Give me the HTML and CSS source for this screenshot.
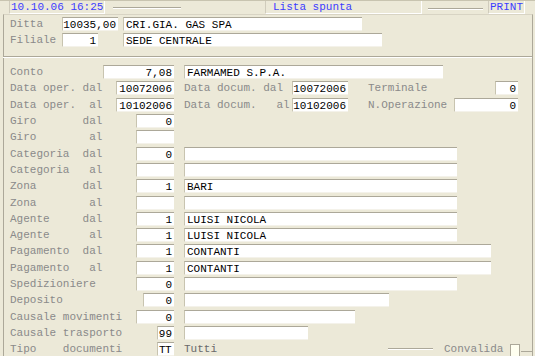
FILE: index.html
```html
<!DOCTYPE html>
<html lang="it">
<head>
  <meta charset="UTF-8">
  <title>Lista spunta</title>
  <link rel="stylesheet" href="styles.css">
</head>
<body>
<div class="screen">

  <div class="topbar">
    <div class="tab clock">10.10.06 16:25</div>
    <div class="groove g1"></div>
    <div class="tab title">Lista spunta</div>
    <div class="groove g2"></div>
    <div class="tab print">PRINT</div>
  </div>

  <div class="head">
    <div class="row">
      <span class="lbl w52">Ditta</span>
      <span class="fld num w56">10035,00</span>
      <span class="fld txt w239 ml5">CRI.GIA. GAS SPA</span>
    </div>
    <div class="row">
      <span class="lbl w52">Filiale</span>
      <span class="fld num w36">1</span>
      <span class="fld txt w259 ml25">SEDE CENTRALE</span>
    </div>
  </div>

  <div class="main">
    <div class="row">
      <div class="left"><span class="lbl">Conto</span><span class="fld num w71">7,08</span></div>
      <span class="fld txt w259">FARMAMED S.P.A.</span>
    </div>
    <div class="row">
      <div class="left"><span class="lbl">Data oper. dal</span><span class="fld num w58">10072006</span></div>
      <span class="lbl w108">Data docum. dal</span>
      <span class="fld num w56">10072006</span>
      <span class="lbl w127 ml20">Terminale</span>
      <span class="fld num w23">0</span>
    </div>
    <div class="row">
      <div class="left"><span class="lbl">Data oper.  al</span><span class="fld num w58">10102006</span></div>
      <span class="lbl w108">Data docum.   al</span>
      <span class="fld num w56">10102006</span>
      <span class="lbl w86 ml20">N.Operazione</span>
      <span class="fld num w64">0</span>
    </div>
    <div class="row">
      <div class="left"><span class="lbl">Giro       dal</span><span class="fld num w38">0</span></div>
    </div>
    <div class="row">
      <div class="left"><span class="lbl">Giro        al</span><span class="fld num w38"></span></div>
    </div>
    <div class="row">
      <div class="left"><span class="lbl">Categoria  dal</span><span class="fld num w38">0</span></div>
      <span class="fld txt w273"></span>
    </div>
    <div class="row">
      <div class="left"><span class="lbl">Categoria   al</span><span class="fld num w38"></span></div>
      <span class="fld txt w273"></span>
    </div>
    <div class="row">
      <div class="left"><span class="lbl">Zona       dal</span><span class="fld num w38">1</span></div>
      <span class="fld txt w273">BARI</span>
    </div>
    <div class="row">
      <div class="left"><span class="lbl">Zona        al</span><span class="fld num w38"></span></div>
      <span class="fld txt w273"></span>
    </div>
    <div class="row">
      <div class="left"><span class="lbl">Agente     dal</span><span class="fld num w38">1</span></div>
      <span class="fld txt w273">LUISI NICOLA</span>
    </div>
    <div class="row">
      <div class="left"><span class="lbl">Agente      al</span><span class="fld num w38">1</span></div>
      <span class="fld txt w273">LUISI NICOLA</span>
    </div>
    <div class="row">
      <div class="left"><span class="lbl">Pagamento  dal</span><span class="fld num w38">1</span></div>
      <span class="fld txt w307">CONTANTI</span>
    </div>
    <div class="row">
      <div class="left"><span class="lbl">Pagamento   al</span><span class="fld num w38">1</span></div>
      <span class="fld txt w307">CONTANTI</span>
    </div>
    <div class="row">
      <div class="left"><span class="lbl">Spedizioniere</span><span class="fld num w38">0</span></div>
      <span class="fld txt w273"></span>
    </div>
    <div class="row">
      <div class="left"><span class="lbl">Deposito</span><span class="fld num w31">0</span></div>
      <span class="fld txt w205"></span>
    </div>
    <div class="row">
      <div class="left"><span class="lbl">Causale movimenti</span><span class="fld num w38">0</span></div>
      <span class="fld txt w171"></span>
    </div>
    <div class="row">
      <div class="left"><span class="lbl">Causale trasporto</span><span class="fld num w17">99</span></div>
      <span class="fld txt w124"></span>
    </div>
    <div class="row">
      <div class="left"><span class="lbl">Tipo    documenti</span><span class="fld code w17">TT</span></div>
      <span class="lbl tutti">Tutti</span>
      <div class="groove g3"></div>
      <span class="lbl">Convalida</span>
      <span class="check"></span>
    </div>
  </div>

</div>
</body>
</html>
```
FILE: styles.css
```css
body {
  margin: 0;
  background-color: #ece9d8;
  font-family: "Liberation Mono", "DejaVu Sans Mono", monospace;
  font-size: 11px;
}
.screen {
  width: 535px;
  height: 356px;
  overflow: hidden;
  position: relative;
  box-sizing: border-box;
  border-top: 1px solid #c8c4b0;
}
.screen::before {
  content: "";
  position: absolute;
  left: 3px;
  right: 2px;
  top: 13px;
  bottom: -2px;
  border-left: 1px solid #aca899;
  border-right: 1px solid #aca899;
  border-top: 1px solid #d8d4c4;
}
.topbar {
  display: flex;
  align-items: flex-start;
  height: 13px;
  padding-left: 9px;
  position: relative;
  z-index: 1;
}
.tab {
  height: 13px;
  line-height: 12px;
  color: #3c3cff;
  white-space: nowrap;
  box-sizing: border-box;
  border-right: 1px solid #fff;
  border-bottom: 1px solid #fff;
  border-left: 1px solid #d0ccbc;
  background: #ece9d8;
}
.clock {
  width: 96px;
  padding-left: 1px;
}
.title {
  width: 157px;
  padding-left: 7px;
}
.print {
  width: 37px;
  padding-left: 1px;
}
.groove {
  height: 0;
  border-top: 1px solid #aca899;
  border-bottom: 1px solid #fff;
}
.g1 {
  margin: 6px 84px 0 8px;
  width: 68px;
}
.g2 {
  margin: 7px 5px 0 6px;
  width: 55px;
}
.g3 {
  width: 45px;
  margin: 0 11px 0 171px;
}
.head {
  height: 40px;
  border-bottom: 1px solid #aca899;
  margin: 0 3px;
  padding: 2px 0 0 7px;
  position: relative;
}
.head::after {
  content: "";
  position: absolute;
  left: 0;
  right: 0;
  bottom: -2px;
  border-bottom: 1px solid #fff;
}
.row {
  display: flex;
  align-items: center;
  height: 16.3px;
}
.head .row {
  height: 16px;
}
.main {
  padding: 7px 0 0 10px;
}
.left {
  width: 164px;
  margin-right: 10px;
  display: flex;
  justify-content: space-between;
  align-items: center;
}
.lbl {
  color: #8a8a8a;
  white-space: pre;
  flex-shrink: 0;
}
.fld {
  height: 14px;
  line-height: 14px;
  background: #fff;
  color: #000;
  box-sizing: border-box;
  border-top: 1px solid #aca899;
  border-left: 1px solid #c8c4b0;
  border-bottom: 1px solid #f4f2ea;
  white-space: pre;
  overflow: hidden;
  flex-shrink: 0;
}
.num {
  text-align: right;
  padding-right: 2px;
}
.txt {
  padding-left: 2px;
}
.code {
  padding-left: 1px;
  letter-spacing: -0.6px;
}
.tutti {
  color: #6a6a6a;
}
.check {
  width: 10px;
  height: 13px;
  margin-left: 7px;
  background: #fffff0;
  border: 1px solid #aca899;
  border-bottom: none;
  box-sizing: border-box;
  align-self: flex-end;
  position: relative;
}
.check::after {
  content: "";
  position: absolute;
  left: 10px;
  top: 6px;
  width: 12px;
  border-top: 1px solid #aca899;
}
.w17 { width: 17px; }
.w23 { width: 23px; }
.w31 { width: 31px; }
.w36 { width: 36px; }
.w38 { width: 38px; }
.w52 { width: 52px; }
.w56 { width: 56px; }
.w58 { width: 58px; }
.w64 { width: 64px; }
.w71 { width: 71px; }
.w86 { width: 86px; }
.w108 { width: 108px; }
.w124 { width: 124px; }
.w127 { width: 127px; }
.w171 { width: 171px; }
.w205 { width: 205px; }
.w239 { width: 239px; }
.w259 { width: 259px; }
.w273 { width: 273px; }
.w307 { width: 307px; }
.ml5 { margin-left: 5px; }
.ml20 { margin-left: 20px; }
.ml25 { margin-left: 25px; }
```
